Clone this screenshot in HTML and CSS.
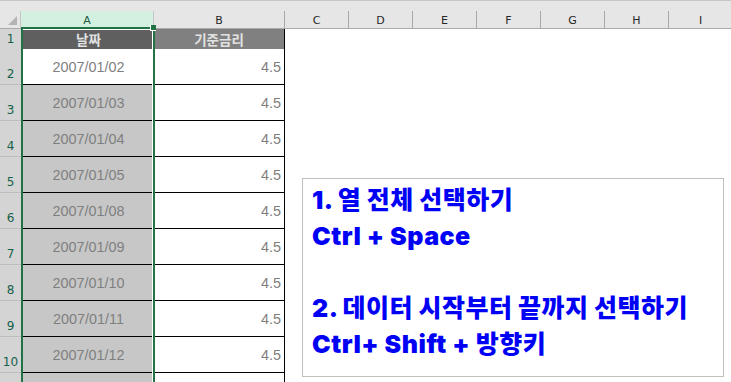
FILE: index.html
```html
<!DOCTYPE html>
<html lang="ko">
<head>
<meta charset="utf-8">
<link rel="stylesheet" href="styles.css">
</head>
<body>
<div class="sheet">
  <div class="topstrip"></div>
  <div class="row colhead">
    <div class="corner"><span class="tri"></span></div>
    <div class="ch ch-a">A</div>
    <div class="ch">B</div>
    <div class="ch">C</div>
    <div class="ch">D</div>
    <div class="ch">E</div>
    <div class="ch">F</div>
    <div class="ch">G</div>
    <div class="ch">H</div>
    <div class="ch">I</div>
  </div>
  <div class="row r1">
    <div class="rh">1</div>
    <div class="c a hd-a">날짜</div>
    <div class="c b hd-b">기준금리</div>
    <div class="rest"></div>
  </div>
  <div class="row">
    <div class="rh">2</div>
    <div class="c a active">2007/01/02</div>
    <div class="c b num">4.5</div>
    <div class="rest"></div>
  </div>
  <div class="row">
    <div class="rh">3</div>
    <div class="c a">2007/01/03</div>
    <div class="c b num">4.5</div>
    <div class="rest"></div>
  </div>
  <div class="row">
    <div class="rh">4</div>
    <div class="c a">2007/01/04</div>
    <div class="c b num">4.5</div>
    <div class="rest"></div>
  </div>
  <div class="row">
    <div class="rh">5</div>
    <div class="c a">2007/01/05</div>
    <div class="c b num">4.5</div>
    <div class="rest"></div>
  </div>
  <div class="row">
    <div class="rh">6</div>
    <div class="c a">2007/01/08</div>
    <div class="c b num">4.5</div>
    <div class="rest"></div>
  </div>
  <div class="row">
    <div class="rh">7</div>
    <div class="c a">2007/01/09</div>
    <div class="c b num">4.5</div>
    <div class="rest"></div>
  </div>
  <div class="row">
    <div class="rh">8</div>
    <div class="c a">2007/01/10</div>
    <div class="c b num">4.5</div>
    <div class="rest"></div>
  </div>
  <div class="row">
    <div class="rh">9</div>
    <div class="c a">2007/01/11</div>
    <div class="c b num">4.5</div>
    <div class="rest"></div>
  </div>
  <div class="row">
    <div class="rh">10</div>
    <div class="c a">2007/01/12</div>
    <div class="c b num">4.5</div>
    <div class="rest"></div>
  </div>
  <div class="row">
    <div class="rh"></div>
    <div class="c a"></div>
    <div class="c b"></div>
    <div class="rest"></div>
  </div>

  <div class="selection"></div>
  <div class="handle"></div>

  <div class="note">
    <p>1. 열 전체 선택하기</p>
    <p>Ctrl + Space</p>
    <p>&nbsp;</p>
    <p>2. 데이터 시작부터 끝까지 선택하기</p>
    <p>Ctrl+ Shift + 방향키</p>
  </div>
</div>
</body>
</html>
```

FILE: styles.css
```css
html, body {
  margin: 0;
  padding: 0;
  background: #ffffff;
  overflow: hidden;
}

.sheet {
  position: relative;
  width: 731px;
  height: 382px;
  overflow: hidden;
  font-family: "Liberation Sans", Arial, sans-serif;
}

.topstrip {
  height: 10px;
  background: #e6e6e6;
  border-top: 1px solid #c6c6c6;
}

.row {
  display: grid;
  grid-template-columns: 21px 133px 131px repeat(7, 64px);
  height: 36px;
}

.colhead {
  height: 17px;
  background: #e6e6e6;
  border-bottom: 1px solid #ababab;
}

.corner {
  position: relative;
  border-right: 1px solid #c6c6c6;
  box-sizing: border-box;
}

.tri {
  position: absolute;
  right: 3px;
  bottom: 3px;
  width: 0;
  height: 0;
  border-left: 9px solid transparent;
  border-bottom: 9px solid #b4b4b4;
}

.ch {
  display: flex;
  align-items: center;
  justify-content: center;
  font-family: "DejaVu Sans", "Liberation Sans", sans-serif;
  font-size: 11px;
  color: #262626;
  border-right: 1px solid #a8a8a8;
  box-sizing: border-box;
  padding-top: 1px;
}

.ch-a {
  background: #d3f0e0;
  color: #1d5b3e;
  border-right: 1px solid #c6c6c6;
}

.r1 {
  height: 20px;
}

.rh {
  background: #d4d4d4;
  border-bottom: 1px solid #bdbdbd;
  display: flex;
  align-items: flex-end;
  justify-content: center;
  font-family: "DejaVu Sans", "Liberation Sans", sans-serif;
  font-size: 12px;
  color: #16604a;
  padding-bottom: 3px;
  box-sizing: border-box;
}

.c {
  border-bottom: 1px solid #000000;
  display: flex;
  align-items: center;
  font-size: 14.4px;
  color: #7f7f7f;
  box-sizing: border-box;
}

.a {
  background: #c7c7c7;
  justify-content: center;
  padding-left: 2px;
}

.a.active {
  background: #ffffff;
}

.b {
  background: #ffffff;
  border-right: 1px solid #000000;
  justify-content: flex-end;
  padding-right: 3px;
}

.hd-a, .hd-b {
  font-family: "Noto Sans CJK KR", sans-serif;
  font-weight: 700;
  font-size: 13.5px;
  color: #e2e2e2;
}

.hd-a {
  background: #5f5f5f;
}

.hd-b {
  background: #808080;
  justify-content: center;
  padding-right: 0;
}

.rest {
  grid-column: 4 / span 7;
  background: #ffffff;
}

.selection {
  position: absolute;
  left: 21px;
  top: 27px;
  width: 134px;
  height: 400px;
  border: 2px solid #217346;
  box-sizing: border-box;
  box-shadow: inset -1px 0 0 #ffffff, inset 0 1px 0 #ffffff;
}

.handle {
  position: absolute;
  left: 150px;
  top: 25px;
  width: 5px;
  height: 5px;
  background: #217346;
  border-left: 1px solid #ffffff;
  border-bottom: 1px solid #ffffff;
}

.note {
  position: absolute;
  left: 302px;
  top: 178px;
  width: 422px;
  height: 199px;
  box-sizing: border-box;
  border: 1px solid #bfbfbf;
  background: #ffffff;
  padding: 3px 0 0 9px;
  font-family: "Inter", "Noto Sans CJK KR", sans-serif;
  font-weight: 900;
  font-size: 25px;
  line-height: 36px;
  color: #0000f5;
  letter-spacing: 0.5px;
}

.note p {
  margin: 0;
  white-space: nowrap;
}
```
